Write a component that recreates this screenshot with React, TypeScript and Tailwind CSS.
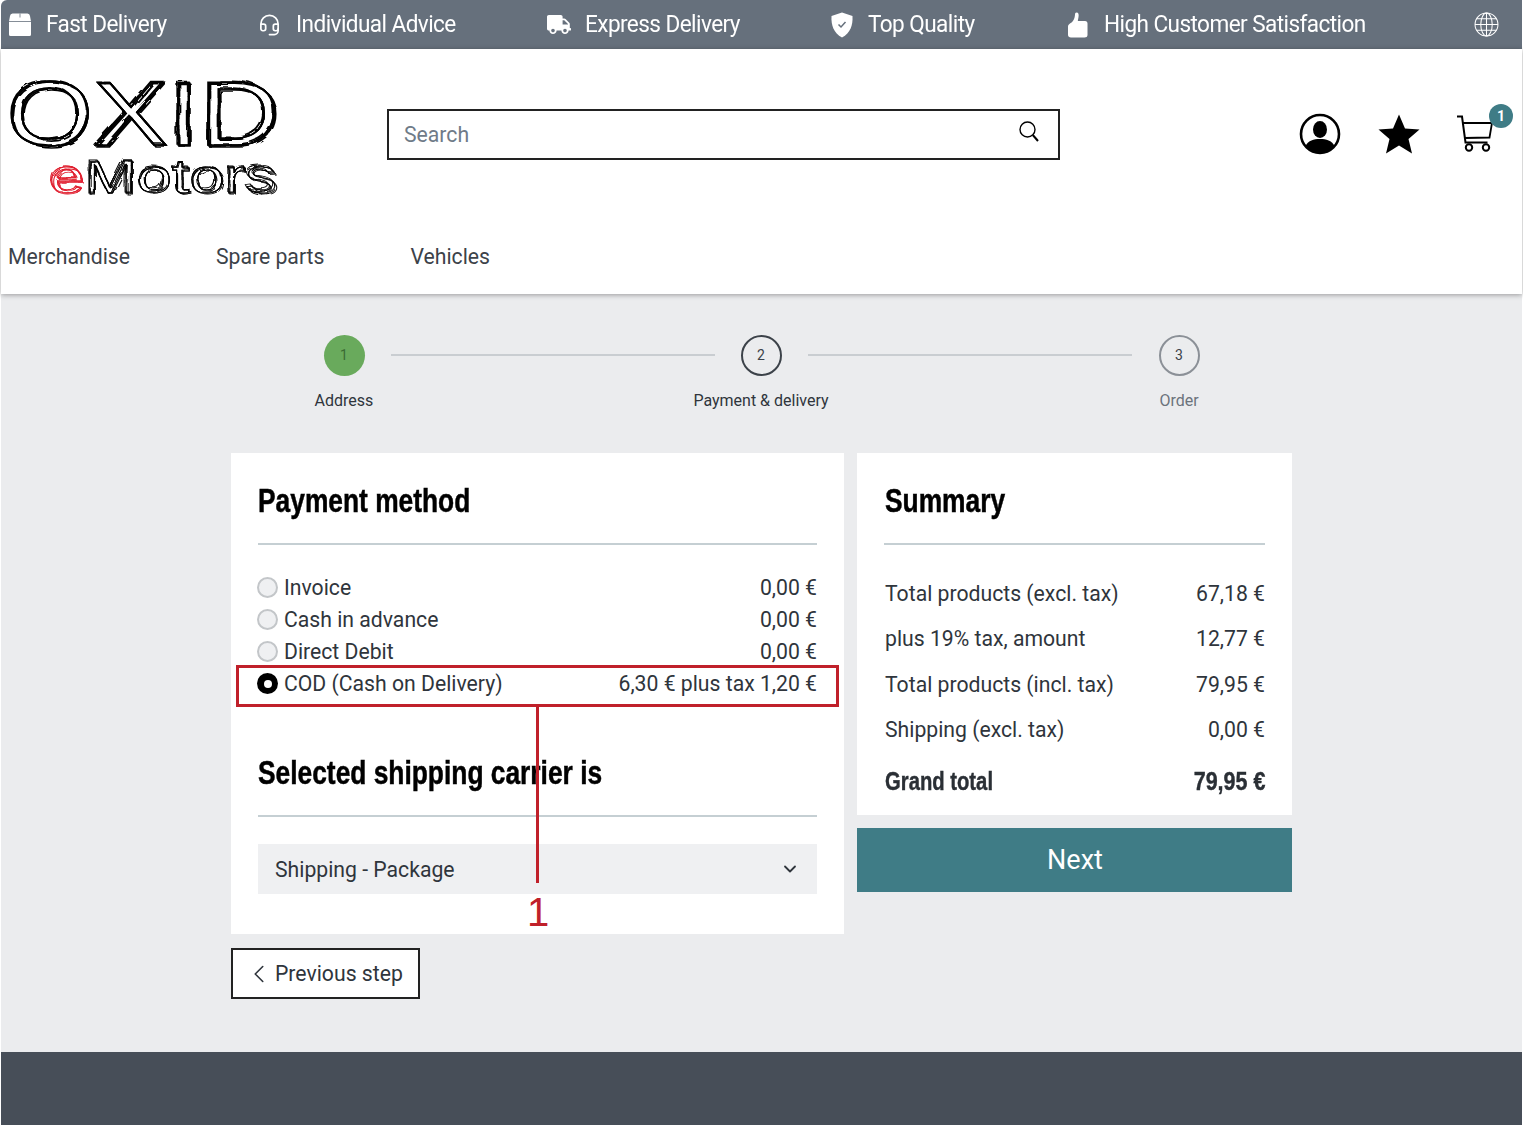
import React from "react";
import { ChevronDown, ChevronLeft, Headset } from "lucide-react";
import { FaTruck } from "react-icons/fa";

const perks = [
  { label: "Fast Delivery", icon: <BoxIcon />, gap: "gap-[14px]", width: "w-[249px]" },
  { label: "Individual Advice", icon: <Headset className="h-[26px] w-[23px]" strokeWidth={1.8} />, gap: "gap-[15px]", width: "w-[290px]" },
  { label: "Express Delivery", icon: <FaTruck className="h-[21px] w-[25px]" />, gap: "gap-[14px]", width: "w-[283px]" },
  { label: "Top Quality", icon: <ShieldIcon />, gap: "gap-[14px]", width: "w-[236px]" },
  { label: "High Customer Satisfaction", icon: <ThumbIcon />, gap: "gap-[14px]", width: "w-[405px]" },
];

const methods = [
  { label: "Invoice", price: "0,00 €" },
  { label: "Cash in advance", price: "0,00 €" },
  { label: "Direct Debit", price: "0,00 €" },
];

const totals = [
  { label: "Total products (excl. tax)", value: "67,18 €" },
  { label: "plus 19% tax, amount", value: "12,77 €" },
  { label: "Total products (incl. tax)", value: "79,95 €" },
  { label: "Shipping (excl. tax)", value: "0,00 €" },
];

function BoxIcon() {
  return (
    <svg viewBox="0 0 24 24" className="h-[25px] w-[24px]">
      <path fill="currentColor" d="M4.500 1h15A3 3 0 0 1 22 3.500L23 9v13a1.500 1.500 0 0 1-1.500 1.500h-19A1.500 1.500 0 0 1 1 22V9l1-5.500A3 3 0 0 1 4.500 1z" />
      <path fill="none" stroke="#66707c" strokeWidth="0.800" d="M1 9h22M12 1v4" />
    </svg>
  );
}

function ShieldIcon() {
  return (
    <svg viewBox="0 0 24 26" className="h-[26px] w-[24px]">
      <path fill="currentColor" d="M12 0.500 22.500 4c.5 9-2 17-10.500 21.500C3.500 21 1 13 1.500 4z" />
      <path fill="none" stroke="#66707c" strokeWidth="1.500" d="m8.500 12.500 2.500 2.500 4.500-5" />
    </svg>
  );
}

function ThumbIcon() {
  return (
    <svg viewBox="0 0 20 26" className="h-[26px] w-[20px]" fill="currentColor">
      <path d="M8.500 0.500c2 0 2.500 2 2 4.500l-.7 4h7.200c1.700 0 2.500 1 2.500 2.500V23c0 1.700-1.200 2.500-3 2.500H3c-1.800 0-3-1-3-2.800v-8.200c0-1.500 1-2.300 2.300-3.300C5 10 6.800 6.500 7 2.500 7.100 1.200 7.500.5 8.500.5z" />
    </svg>
  );
}

function GlobeIcon() {
  return (
    <svg viewBox="0 0 24 24" className="h-[25px] w-[25px]" fill="none" stroke="currentColor" strokeWidth="1">
      <circle cx="12" cy="12" r="11" />
      <ellipse cx="12" cy="12" rx="5.500" ry="11" />
      <path d="M12 1v22M1 12h22M2.500 6.500h19M2.500 17.500h19" />
    </svg>
  );
}

function UserIcon() {
  return (
    <svg viewBox="0 0 42 42" className="h-[42px] w-[42px]">
      <circle cx="21" cy="21" r="19" fill="none" stroke="black" strokeWidth="2.600" />
      <ellipse cx="21" cy="16.500" rx="7" ry="8.500" fill="black" />
      <path fill="black" d="M6.500 33c3-5.500 8-7 14.500-7s11.500 1.500 14.500 7C32 37.500 27 40 21 40S10 37.500 6.500 33z" />
    </svg>
  );
}

function StarIcon() {
  return (
    <svg viewBox="0 0 42 40" className="h-[40px] w-[42px]" fill="black">
      <path d="M21 0.500 27 14.500 41.500 15.500 30.500 25 34 39.500 21 31.500 8 39.500 11.500 25 0.500 15.500 15 14.500z" />
    </svg>
  );
}

function CartIcon() {
  return (
    <svg viewBox="0 0 40 40" className="h-[40px] w-[40px]" fill="none" stroke="black" strokeWidth="2">
      <path d="M1 2.500h5l3.500 26h22" />
      <path d="M7 9h29l-2.500 14.500L9 24" strokeWidth="1.800" />
      <circle cx="13" cy="33.500" r="3.200" />
      <circle cx="30" cy="33.500" r="3.200" />
    </svg>
  );
}

function SearchIcon() {
  return (
    <svg viewBox="0 0 24 24" className="mb-[5px] h-[24px] w-[24px]" fill="none" stroke="black">
      <circle cx="10.500" cy="9.500" r="7.500" strokeWidth="1.400" />
      <path d="m15.800 15 5.200 6" strokeWidth="2" />
    </svg>
  );
}

function Logo() {
  return (
    <svg viewBox="0 0 280 130" className="h-[130px] w-[280px] overflow-visible">
      <defs>
        {/* one real text, redrawn a few times with a different wobble so it reads as scribble */}
        <filter id="sketch" filterUnits="userSpaceOnUse" x="-10" y="-10" width="300" height="150">
          <feTurbulence type="fractalNoise" baseFrequency="0.03" numOctaves="2" seed="4" result="n1" />
          <feTurbulence type="fractalNoise" baseFrequency="0.05" numOctaves="2" seed="11" result="n2" />
          <feTurbulence type="fractalNoise" baseFrequency="0.02" numOctaves="2" seed="23" result="n3" />
          <feDisplacementMap in="SourceGraphic" in2="n1" scale="8" result="a" />
          <feDisplacementMap in="SourceGraphic" in2="n2" scale="9" result="b" />
          <feDisplacementMap in="SourceGraphic" in2="n3" scale="10" result="c" />
          <feMerge>
            <feMergeNode in="a" />
            <feMergeNode in="b" />
            <feMergeNode in="c" />
            <feMergeNode in="SourceGraphic" />
          </feMerge>
        </filter>
      </defs>
      <g filter="url(#sketch)" fontFamily="'Liberation Sans', sans-serif">
        <text x="5" y="68" fontSize="90" textLength="274" lengthAdjust="spacingAndGlyphs" fill="none" stroke="#000" strokeWidth="1.600">
          OXID
        </text>
        <text x="48" y="116" fontSize="48" textLength="228" lengthAdjust="spacingAndGlyphs" fill="none" stroke="#000" strokeWidth="0.800">
          <tspan stroke="#e0202f">e</tspan>Motors
        </text>
      </g>
    </svg>
  );
}

function Heading({ children }: { children: React.ReactNode }) {
  return (
    <h2 className="origin-left scale-x-[0.775] whitespace-nowrap font-['Liberation_Sans',sans-serif] text-[34px] leading-[40px] font-bold text-black [-webkit-text-stroke:0.5px_black]">
      {children}
    </h2>
  );
}

function Step({ num, label, done, muted }: { num: string; label: string; done?: boolean; muted?: boolean }) {
  return (
    <div className="flex w-[140px] flex-col items-center gap-[15px]">
      <div
        className={`flex h-[41px] w-[41px] items-center justify-center rounded-full text-[14px] ${
          done
            ? "bg-[#69aa5c] text-[#3b6b33]"
            : muted
              ? "border-2 border-[#8b9097] bg-[#ebecee] text-[#3c4249]"
              : "border-2 border-[#3c4249] bg-[#ebecee] text-[#3c4249]"
        }`}
      >
        {num}
      </div>
      <span className={`text-[16px] leading-[20px] whitespace-nowrap ${muted ? "text-[#6c737c]" : "text-[#2f353c]"}`}>{label}</span>
    </div>
  );
}

export default function App() {
  return (
    <div className="flex min-h-[1125px] flex-col bg-white px-px font-['Roboto',sans-serif] text-[#2f353c]">
      {/* Top perks bar */}
      <div className="flex h-[49px] items-center justify-between rounded-tl-md bg-[#66707c] pr-[23px] pl-[7px] text-white">
        <div className="flex items-center">
          {perks.map((p) => (
            <div key={p.label} className={`flex items-center ${p.gap} ${p.width}`}>
              <span className="flex w-[24px] shrink-0 justify-center">{p.icon}</span>
              <span className="-mt-px origin-left scale-x-[0.94] text-[24px] leading-[30px] tracking-[-0.6px] whitespace-nowrap">{p.label}</span>
            </div>
          ))}
        </div>
        <GlobeIcon />
      </div>

      {/* Header */}
      <header className="relative z-10 h-[245px] bg-white shadow-[0_1px_5px_rgba(0,0,0,0.35)]">
        <div className="flex h-[194px] items-start">
          <div className="mt-[28px] w-[386px] shrink-0">
            <Logo />
          </div>
          <div className="mt-[60px] flex h-[51px] w-[673px] items-center justify-between border-2 border-[#222] pr-[17px] pl-[15px]">
            <span className="mt-px text-[21.200px] text-[#6f7b88]">Search</span>
            <SearchIcon />
          </div>
          <div className="mt-[64px] ml-[239px] flex items-center gap-[37px]">
            <UserIcon />
            <StarIcon />
            <div className="relative -ml-px">
              <CartIcon />
              <span className="absolute -top-[10px] -right-[17px] flex h-[24px] w-[24px] items-center justify-center rounded-full bg-[#3f7c86] text-[14px] font-bold text-white">
                1
              </span>
            </div>
          </div>
        </div>
        <nav className="flex gap-[86px] pl-[7px] text-[21.200px] leading-[28px] text-[#3c4249]">
          <span>Merchandise</span>
          <span>Spare parts</span>
          <span>Vehicles</span>
        </nav>
      </header>

      {/* Main */}
      <main className="flex-1 bg-[#ebecee]">
        {/* Stepper */}
        <div className="ml-[273px] flex w-[976px] items-start pt-[41px]">
          <Step num="1" label="Address" done />
          <div className="mt-[19px] ml-[-23px] h-[2px] w-[324px] bg-[#c9cdd1]" />
          <div className="ml-[-24px]">
            <Step num="2" label="Payment & delivery" />
          </div>
          <div className="mt-[19px] ml-[-23px] h-[2px] w-[324px] bg-[#c9cdd1]" />
          <div className="ml-[-23px]">
            <Step num="3" label="Order" muted />
          </div>
        </div>

        {/* Columns */}
        <div className="mt-[42px] ml-[230px] flex w-[1061px] items-start gap-[13px]">
          <div className="w-[613px] shrink-0">
            <section className="relative h-[481px] bg-white px-[27px] pt-[27px]">
              <Heading>Payment method</Heading>
              <div className="mt-[23px] border-t-2 border-[#c5cfd3]" />
              <div className="mt-[27px] flex flex-col text-[21.200px]">
                {methods.map((m) => (
                  <div key={m.label} className="flex h-[32px] items-center justify-between">
                    <div className="-ml-px flex items-center gap-[6px]">
                      <span className="h-[21px] w-[21px] rounded-full border-2 border-[#c3c6c9] bg-[#eff0f2]" />
                      <span>{m.label}</span>
                    </div>
                    <span>{m.price}</span>
                  </div>
                ))}
                <div className="flex h-[32px] items-center justify-between">
                  <div className="-ml-px flex items-center gap-[6px]">
                    <span className="flex h-[21px] w-[21px] items-center justify-center rounded-full bg-black">
                      <span className="h-[8px] w-[8px] rounded-full bg-white" />
                    </span>
                    <span>COD (Cash on Delivery)</span>
                  </div>
                  <span>6,30 € plus tax 1,20 €</span>
                </div>
              </div>

              <div className="mt-[52px]">
                <Heading>Selected shipping carrier is</Heading>
              </div>
              <div className="mt-[23px] border-t-2 border-[#c5cfd3]" />
              <div className="mt-[27px] flex h-[50px] items-center justify-between bg-[#eff0f2] pr-[17px] pl-[17px] text-[21.200px]">
                <span className="mt-px">Shipping - Package</span>
                <ChevronDown className="h-[20px] w-[20px]" strokeWidth={2.2} />
              </div>

              {/* Red annotation over the form */}
              <div className="absolute top-[212px] left-[5px] h-[42px] w-[603px] border-[3px] border-[#c0202a]" />
              <div className="absolute top-[254px] left-[305px] h-[176px] w-[3px] bg-[#c0202a]" />
              <span className="absolute top-[436px] left-[296px] font-['Liberation_Sans',sans-serif] text-[40px] leading-[46px] text-[#c0202a]">1</span>
            </section>
            <button className="mt-[14px] flex h-[51px] w-[189px] items-center gap-[3px] border-2 border-[#222] bg-white pl-[14px] text-[21.200px]">
              <ChevronLeft className="-mr-[2px] -ml-[3px] h-[30px] w-[30px] shrink-0" strokeWidth={1.3} />
              Previous step
            </button>
          </div>

          <div className="flex-1">
            <section className="h-[362px] bg-white px-[27px] pt-[27px]">
              <div className="pl-px">
                <Heading>Summary</Heading>
              </div>
              <div className="mt-[23px] border-t-2 border-[#c5cfd3]" />
              <div className="mt-[35px] flex flex-col gap-[17px] pl-px text-[21.200px] leading-[28.300px]">
                {totals.map((t) => (
                  <div key={t.label} className="flex justify-between">
                    <span>{t.label}</span>
                    <span>{t.value}</span>
                  </div>
                ))}
              </div>
              <div className="mt-[22px] flex justify-between pl-px font-['Liberation_Sans',sans-serif] text-[25px] leading-[30px] font-bold text-[#2a2f35] [-webkit-text-stroke:0.4px_#2a2f35]">
                <span className="origin-left scale-x-[0.81]">Grand total</span>
                <span className="origin-right scale-x-[0.86]">79,95 €</span>
              </div>
            </section>
            <button className="mt-[13px] h-[64px] w-full bg-[#3f7c86] pt-px pl-px text-[27px] text-white">Next</button>
          </div>
        </div>
      </main>

      {/* Footer */}
      <footer className="h-[73px] bg-[#474e58]" />
    </div>
  );
}
